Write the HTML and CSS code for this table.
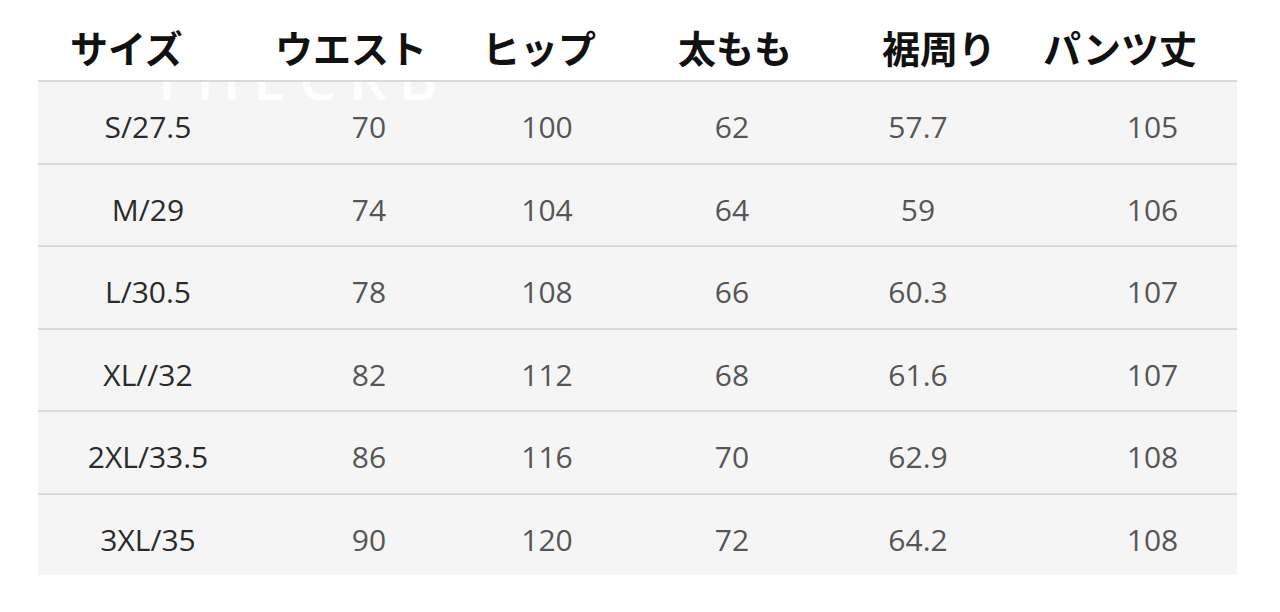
FILE: index.html
```html
<!DOCTYPE html>
<html lang="ja">
<head>
<meta charset="utf-8">
<title>サイズ表</title>
<link rel="stylesheet" href="styles.css">
</head>
<body>
<div class="chart">
  <div class="head">
    <div class="h">サイズ</div>
    <div class="h">ウエスト</div>
    <div class="h">ヒップ</div>
    <div class="h">太もも</div>
    <div class="h">裾周り</div>
    <div class="h">パンツ丈</div>
  </div>
  <div class="body">
    <div class="mark" aria-hidden="true">THECKB</div>
    <div class="row"><div class="c size">S/27.5</div><div class="c">70</div><div class="c">100</div><div class="c">62</div><div class="c">57.7</div><div class="c last">105</div></div>
    <div class="row"><div class="c size">M/29</div><div class="c">74</div><div class="c">104</div><div class="c">64</div><div class="c">59</div><div class="c last">106</div></div>
    <div class="row"><div class="c size">L/30.5</div><div class="c">78</div><div class="c">108</div><div class="c">66</div><div class="c">60.3</div><div class="c last">107</div></div>
    <div class="row"><div class="c size">XL//32</div><div class="c">82</div><div class="c">112</div><div class="c">68</div><div class="c">61.6</div><div class="c last">107</div></div>
    <div class="row"><div class="c size">2XL/33.5</div><div class="c">86</div><div class="c">116</div><div class="c">70</div><div class="c">62.9</div><div class="c last">108</div></div>
    <div class="row"><div class="c size">3XL/35</div><div class="c">90</div><div class="c">120</div><div class="c">72</div><div class="c">64.2</div><div class="c last">108</div></div>
  </div>
</div>
</body>
</html>
```
FILE: styles.css
```css
html, body {
  margin: 0;
  padding: 0;
  background: #ffffff;
}
.chart {
  margin-left: 38px;
  width: 1199px;
}
.head {
  height: 80px;
  box-sizing: border-box;
  padding-top: 28px;
  padding-left: 32px;
  display: grid;
  grid-template-columns: 205px 207px 196px 204px 161px auto;
  font-family: "Noto Sans CJK JP", sans-serif;
  font-weight: 700;
  font-size: 38px;
  line-height: 1;
  color: #111111;
}
.h {
  white-space: nowrap;
}
.body {
  position: relative;
  background: #f5f5f5;
  overflow: hidden;
}
.row {
  position: relative;
  height: 82.5px;
  box-sizing: border-box;
  border-top: 2px solid #dadada;
  display: grid;
  grid-template-columns: 220px 222px 134px 236px 136px 251px;
  align-items: center;
  padding-top: 9px;
  font-family: "Open Sans", sans-serif;
  font-size: 30px;
  color: #565656;
}
.c {
  text-align: center;
  white-space: nowrap;
}
.c.size {
  color: #2a2a2a;
}
.c.last {
  padding-left: 82px;
}
.mark {
  position: absolute;
  left: 112px;
  top: -33px;
  line-height: 60px;
  font-family: "Open Sans", sans-serif;
  font-weight: 600;
  font-size: 60px;
  letter-spacing: 12px;
  color: #ffffff;
  opacity: 0.9;
  pointer-events: none;
}
```
